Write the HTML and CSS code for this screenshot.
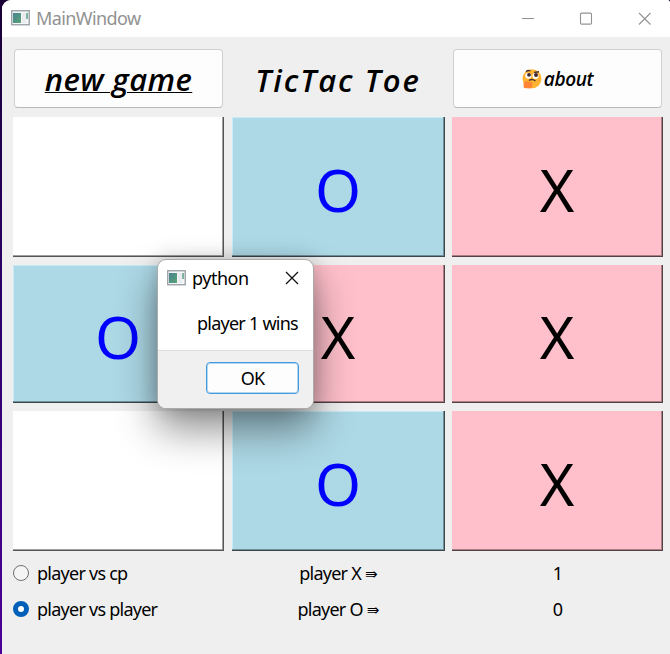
FILE: index.html
```html
<!DOCTYPE html>
<html lang="en">
<head>
<meta charset="utf-8">
<title>MainWindow</title>
<link rel="stylesheet" href="styles.css">
</head>
<body>
<svg class="defs" width="0" height="0" aria-hidden="true">
  <defs>
    <linearGradient id="pane" x1="0" y1="0" x2="1" y2="1">
      <stop offset="0" stop-color="#4b8192"/><stop offset="1" stop-color="#57a475"/>
    </linearGradient>
    <symbol id="app" viewBox="0 0 19 16">
      <rect x=".75" y=".75" width="17.5" height="14" fill="#f5f6f7" stroke="#969da3" stroke-width="1.3"/>
      <rect x="2" y="3" width="8" height="10" fill="url(#pane)"/>
      <rect x="11" y="3" width="4" height="10" fill="#e9ecee"/>
      <rect x="15.3" y="3" width="1.5" height="6" fill="#5c9c87"/>
    </symbol>
  </defs>
</svg>
<div class="window">
  <header class="titlebar">
    <svg class="app-icon" width="19" height="16"><use href="#app"/></svg>
    <span class="title">MainWindow</span>
    <svg class="controls" width="132" height="14" fill="none" stroke="#929292" stroke-width="1.1">
      <path d="M1 6.500h12"/><rect x="59.5" y="1.1" width="11" height="11" rx="1.2"/><path d="M118 1l11.500 11.500M129.500 1l-11.500 11.500"/>
    </svg>
  </header>
  <main class="board">
    <button class="btn new-game"><span>new game</span></button>
    <h1 class="heading"><span>TicTac Toe</span></h1>
    <button class="btn about">
      <svg width="20" height="20" viewBox="0 0 20 20">
        <circle cx="10" cy="9.800" r="9.500" fill="#ffb331"/>
        <path d="M4 2.700Q6 .7 8.500 2M12 3.500l5-.8" fill="none" stroke="#51362e" stroke-width="1.400"/>
        <circle cx="6.300" cy="6.700" r="3" fill="#fff"/><circle cx="13.500" cy="7" r="3" fill="#fff"/>
        <circle cx="7" cy="5.800" r="1.900" fill="#3e2b31"/><circle cx="14" cy="6" r="2" fill="#3e2b31"/>
        <path d="M7 11.500q3-2 6.500.5" fill="none" stroke="#51362e" stroke-width="1.500"/>
        <path d="M2 19q-1.500-5 1.500-7l5 1q3 .5 1.500 2.500 1 3-2 4z" fill="#ff8433"/>
      </svg>
      <span>about</span>
    </button>

    <div class="cell"></div>
    <div class="cell o">O</div>
    <div class="cell x">X</div>
    <div class="cell o">O</div>
    <div class="cell x">X</div>
    <div class="cell x">X</div>
    <div class="cell"></div>
    <div class="cell o">O</div>
    <div class="cell x">X</div>

    <label class="option"><i class="radio"></i><span>player vs cp</span></label>
    <div class="score">player X <b>⇛</b></div>
    <div class="score">1</div>
    <label class="option"><i class="radio on"></i><span>player vs player</span></label>
    <div class="score">player O <b>⇛</b></div>
    <div class="score">0</div>
  </main>
</div>

<div class="dialog" role="dialog">
  <div class="dialog-title">
    <svg class="app-icon" width="19" height="16"><use href="#app"/></svg>
    <span>python</span>
    <svg class="close" width="14" height="14" fill="none" stroke="#111" stroke-width="1.300"><path d="M1 1l12 12M13 1L1 13"/></svg>
  </div>
  <p class="message">player 1 wins</p>
  <div class="dialog-footer"><button class="ok">OK</button></div>
</div>
</body>
</html>
```
FILE: styles.css
```css
* { box-sizing: border-box; }

body {
  margin: 0;
  height: 654px;
  padding-left: 2px;
  overflow: hidden;
  background: linear-gradient(#180035, #2b0068 45%, #4c0096);
  color: #000;
  font: 18px/24px "Noto Sans", sans-serif;
  letter-spacing: -0.75px;
}

.defs { position: absolute; }

button { font: inherit; letter-spacing: inherit; color: inherit; padding: 0; }

.window {
  height: 654px;
  background: #efefef;
  border-radius: 9px 3px 0 0;
  overflow: hidden;
}

.titlebar {
  display: flex;
  align-items: center;
  height: 37px;
  padding: 0 17px 0 9px;
  background: #fff;
  color: #929292;
}

.titlebar .app-icon { margin-top: -1px; }
.title { margin: -1px 0 0 6px; letter-spacing: -0.6px; }
.controls { margin-left: auto; }

.board {
  display: grid;
  grid-template-columns: 211px 212px 211px;
  grid-template-rows: 60px 140px 138px 140px 28px 28px;
  column-gap: 8px;
  row-gap: 8px;
  padding: 12px 0 0 11px;
}

.btn {
  display: flex;
  align-items: center;
  justify-content: center;
  width: 209px;
  height: 59px;
  margin-left: 1px;
  background: #fdfdfd;
  border: 1px solid #d0d0d0;
  border-bottom-color: #b9b9b9;
  border-radius: 4px;
}

.btn, .heading {
  font-family: "Open Sans", sans-serif;
  font-style: italic;
  font-weight: 600;
}

.new-game {
  font-size: 31px;
  letter-spacing: 0.4px;
  text-decoration: underline;
  text-decoration-thickness: 1px;
}

.heading {
  margin: 0;
  text-align: center;
  font-size: 31px;
  line-height: 62px;
  letter-spacing: 2px;
}

.about { font-size: 19px; letter-spacing: -0.4px; gap: 2px; }

.cell {
  display: flex;
  align-items: center;
  justify-content: center;
  padding-top: 5px;
  background: #fff;
  border-right: 1px solid #555;
  border-bottom: 1px solid #555;
  box-shadow: inset -1px -1px #a0a0a0;
  font-size: 59px;
  letter-spacing: 0;
}

/* The middle column's cells are one pixel wider than its track. */
.cell:nth-child(3n + 2) { margin-right: -1px; }

.o { background: #add8e6; color: #00f; border-color: #38484d; box-shadow: inset -1px -1px #73909a, inset 1px 1px #c6edf7; }
.x { background: #ffc0cb; border-color: #554044; box-shadow: inset -1px -1px #aa8087; }

.option { display: flex; align-items: center; gap: 8px; }

.radio {
  width: 16px;
  height: 16px;
  border: 1px solid #707070;
  border-radius: 50%;
  background: #f5f5f5;
}

.radio.on { border: 5px solid #005fb8; background: #fff; }

.score { text-align: center; line-height: 28px; }
.score b { font: 15px/1 "DejaVu Sans", sans-serif; position: relative; top: -1px; }

.dialog {
  position: absolute;
  left: 157px;
  top: 259px;
  width: 157px;
  height: 150px;
  display: flex;
  flex-direction: column;
  background: #fff;
  border: 1px solid #aaa;
  border-radius: 9px;
  overflow: hidden;
  box-shadow: 0 20px 40px rgba(0, 0, 0, .45), 0 0 18px rgba(0, 0, 0, .16);
}

.dialog-title { display: flex; align-items: center; height: 36px; padding: 0 14px 0 9px; }
.dialog-title span { margin-left: 6px; letter-spacing: -0.5px; }
.close { margin-left: auto; }
.message { margin: 15px 15px 0 0; text-align: right; }

.dialog-footer {
  margin-top: auto;
  height: 58px;
  padding: 11px 14px 0 0;
  background: #f0f0f0;
  border-top: 1px solid #dfdfdf;
}

.ok {
  display: block;
  width: 93px;
  height: 32px;
  margin-left: auto;
  background: #fdfdfd;
  border: 1px solid #459ade;
  box-shadow: inset 0 0 0 1px #b4d7f1;
  border-radius: 4px;
}
```
